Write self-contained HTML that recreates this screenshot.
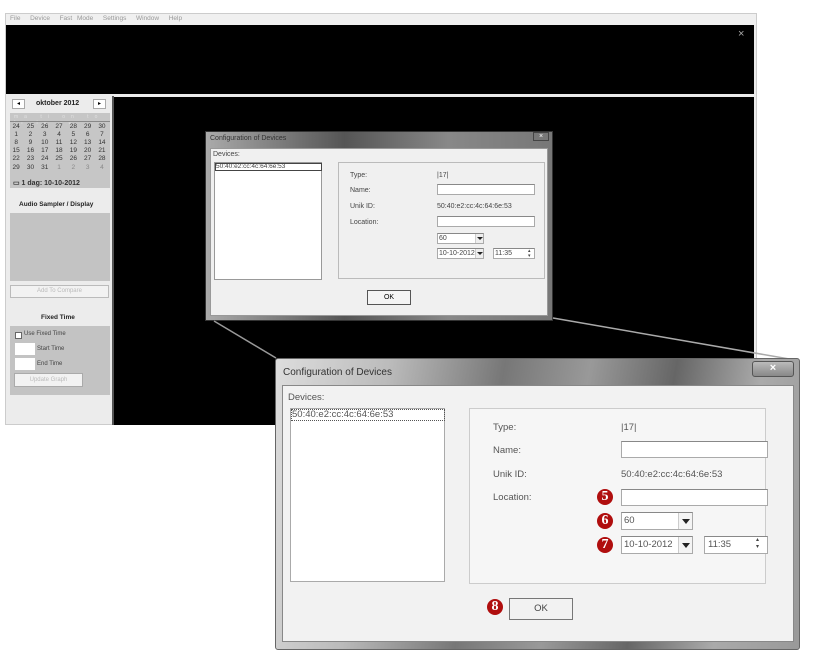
<!DOCTYPE html>
<html><head><meta charset="utf-8"><style>
*{box-sizing:border-box;margin:0;padding:0}
body{width:813px;height:654px;background:#fff;position:relative;overflow:hidden;font-family:"Liberation Sans",sans-serif}
.a{position:absolute}
.t{position:absolute;font-size:7px;color:#444;white-space:nowrap}
.t2{position:absolute;font-size:9.5px;color:#555;white-space:nowrap}
.inp{position:absolute;background:#fff;border:1px solid #aaa;border-top-color:#888}
.dd{position:absolute;right:0;top:0;bottom:0;width:14px;border-left:1px solid #ccc;background:#f4f4f4}
.dd:after{content:"";position:absolute;left:3px;top:6px;border-left:4px solid transparent;border-right:4px solid transparent;border-top:5px solid #222}
.sd{position:absolute;right:0;top:0;bottom:0;width:8px;background:#eee;border-left:1px solid #ccc}
.sd:after{content:"";position:absolute;left:1px;top:3px;border-left:3px solid transparent;border-right:3px solid transparent;border-top:3px solid #222}
.num{position:absolute;width:16px;height:16px;border-radius:50%;background:#b00e0e;color:#fff;font-family:"Liberation Serif",serif;font-weight:bold;font-size:14px;line-height:16px;text-align:center}
.cal{position:absolute;font-size:6.5px;color:#333;font-weight:bold}
.g td{width:14.3px;text-align:center;font-size:6.5px;color:#333;height:8.1px;padding:0;line-height:8px}
</style></head><body>
<div class="a" style="left:5px;top:13px;width:752px;height:412px;background:#ececec;border:1px solid #ccc"></div>
<div class="a" style="left:6px;top:14px;width:750px;height:11px;background:#f0f0f0"></div>
<div class="t" style="left:10px;top:15px;color:#999;font-size:6.5px;word-spacing:3px">File&nbsp; Device&nbsp; Fast Mode&nbsp; Settings&nbsp; Window&nbsp; Help</div>
<div class="a" style="left:6px;top:25px;width:748px;height:69px;background:#000"></div>
<div class="t" style="left:738px;top:28px;color:#aaa;font-size:11px">×</div>
<div class="a" style="left:114px;top:97px;width:640px;height:328px;background:#000"></div>
<div class="a" style="left:112px;top:96px;width:2px;height:329px;background:#555"></div>
<div class="a" style="left:12px;top:99px;width:13px;height:10px;background:#fff;border:1px solid #aaa;font-size:6px;text-align:center;line-height:8px">◂</div>
<div class="a" style="left:93px;top:99px;width:13px;height:10px;background:#fff;border:1px solid #aaa;font-size:6px;text-align:center;line-height:8px">▸</div>
<div class="cal" style="left:36px;top:100px;font-size:7px;color:#222">oktober 2012</div>
<div class="a" style="left:10px;top:113px;width:100px;height:75px;background:#c6c6c6"></div>
<div class="a" style="left:10px;top:114px;width:100px;height:6px;font-size:5px;color:#e0e0e0;letter-spacing:6px;padding-left:4px">ma ti on to fr lø sø</div>
<div class="a" style="left:10px;top:121px;width:100px;height:1px;background:#888"></div>
<table class="a g" style="left:9px;top:123px;border-collapse:collapse">
<tr><td>24</td><td>25</td><td>26</td><td>27</td><td>28</td><td>29</td><td>30</td></tr>
<tr><td>1</td><td>2</td><td>3</td><td>4</td><td>5</td><td>6</td><td>7</td></tr>
<tr><td>8</td><td>9</td><td>10</td><td>11</td><td>12</td><td>13</td><td>14</td></tr>
<tr><td>15</td><td>16</td><td>17</td><td>18</td><td>19</td><td>20</td><td>21</td></tr>
<tr><td>22</td><td>23</td><td>24</td><td>25</td><td>26</td><td>27</td><td>28</td></tr>
<tr><td>29</td><td>30</td><td>31</td><td style="color:#888">1</td><td style="color:#888">2</td><td style="color:#888">3</td><td style="color:#888">4</td></tr>
</table>
<div class="cal" style="left:13px;top:179px;font-size:7px">▭ 1 dag: 10-10-2012</div>
<div class="cal" style="left:19px;top:201px;font-size:6.5px;color:#222">Audio Sampler / Display</div>
<div class="a" style="left:10px;top:213px;width:100px;height:68px;background:#c3c3c3"></div>
<div class="a" style="left:10px;top:285px;width:99px;height:13px;background:#f2f2f2;border:1px solid #bbb;font-size:6px;color:#bbb;text-align:center;line-height:11px">Add To Compare</div>
<div class="cal" style="left:41px;top:314px;font-size:6.5px;color:#222">Fixed Time</div>
<div class="a" style="left:10px;top:326px;width:100px;height:69px;background:#c3c3c3"></div>
<div class="a" style="left:15px;top:332px;width:7px;height:7px;background:#fff;border:1px solid #666"></div>
<div class="t" style="left:24px;top:331px;font-size:6px">Use Fixed Time</div>
<div class="a" style="left:15px;top:343px;width:20px;height:12px;background:#fff"></div>
<div class="t" style="left:37px;top:346px;font-size:6px">Start Time</div>
<div class="a" style="left:15px;top:358px;width:20px;height:12px;background:#fff"></div>
<div class="t" style="left:37px;top:361px;font-size:6px">End Time</div>
<div class="a" style="left:14px;top:373px;width:69px;height:14px;background:#f2f2f2;border:1px solid #aaa;font-size:6px;color:#bbb;text-align:center;line-height:12px">Update Graph</div>
<div class="a" style="left:205px;top:131px;width:348px;height:190px;background:linear-gradient(90deg,#aaa,#555 40%,#888 70%,#777);border:1px solid #333"></div>
<div class="t" style="left:210px;top:135px;color:#333">Configuration of Devices</div>
<div class="a" style="left:533px;top:132px;width:16px;height:9px;background:#777;border:1px solid #444;color:#fff;font-size:7px;text-align:center;line-height:7px">×</div>
<div class="a" style="left:210px;top:148px;width:338px;height:168px;background:#f0f0f0;border:1px solid #999"></div>
<div class="t" style="left:213px;top:151px">Devices:</div>
<div class="a" style="left:214px;top:162px;width:108px;height:118px;background:#fff;border:1px solid #999"></div>
<div class="a" style="left:215px;top:163px;width:107px;height:8px;border:1px solid #444"></div>
<div class="t" style="left:216px;top:163px;font-size:6.5px">50:40:e2:cc:4c:64:6e:53</div>
<div class="a" style="left:338px;top:162px;width:207px;height:117px;border:1px solid #bbb;background:#f0f0f0"></div>
<div class="t" style="left:350px;top:172px">Type:</div><div class="t" style="left:437px;top:172px">|17|</div>
<div class="t" style="left:350px;top:187px">Name:</div><div class="inp" style="left:437px;top:184px;width:98px;height:11px"></div>
<div class="t" style="left:350px;top:203px">Unik ID:</div><div class="t" style="left:437px;top:203px">50:40:e2:cc:4c:64:6e:53</div>
<div class="t" style="left:350px;top:219px">Location:</div><div class="inp" style="left:437px;top:216px;width:98px;height:11px"></div>
<div class="inp" style="left:437px;top:233px;width:47px;height:11px"><span class="t" style="left:1px;top:1px">60</span><div class="sd"></div></div>
<div class="inp" style="left:437px;top:248px;width:47px;height:11px"><span class="t" style="left:1px;top:1px">10-10-2012</span><div class="sd"></div></div>
<div class="inp" style="left:493px;top:248px;width:42px;height:11px"><span class="t" style="left:1px;top:1px">11:35</span><span class="t" style="left:34px;top:0;font-size:5px;line-height:5px">▴<br>▾</span></div>
<div class="a" style="left:367px;top:290px;width:44px;height:15px;background:#f4f4f4;border:1px solid #555;font-size:7px;text-align:center;line-height:13px">OK</div>
<svg class="a" style="left:0;top:0" width="813" height="654"><line x1="214" y1="321" x2="276" y2="358" stroke="#999" stroke-width="1.5"/><line x1="553" y1="318" x2="795" y2="360" stroke="#aaa" stroke-width="1.5"/></svg>
<div class="a" style="left:275px;top:358px;width:525px;height:292px;background:linear-gradient(100deg,#ddd 0%,#bbb 20%,#777 40%,#999 55%,#666 70%,#aaa 85%,#999 100%);border:1px solid #666;border-radius:3px"></div>
<div class="t2" style="left:283px;top:367px;color:#333;font-size:10px">Configuration of Devices</div>
<div class="a" style="left:752px;top:361px;width:42px;height:16px;background:linear-gradient(#bbb,#888);border:1px solid #555;border-radius:3px;color:#fff;font-size:11px;text-align:center;line-height:13px;font-weight:bold">×</div>
<div class="a" style="left:282px;top:385px;width:512px;height:257px;background:#f2f2f2;border:1px solid #888"></div>
<div class="t2" style="left:288px;top:392px">Devices:</div>
<div class="a" style="left:290px;top:408px;width:155px;height:174px;background:#fff;border:1px solid #aaa"></div>
<div class="a" style="left:291px;top:409px;width:154px;height:12px;border:1px dotted #555"></div>
<div class="t2" style="left:292px;top:409px">50:40:e2:cc:4c:64:6e:53</div>
<div class="a" style="left:469px;top:408px;width:297px;height:176px;border:1px solid #ccc;background:#f6f6f6"></div>
<div class="t2" style="left:493px;top:422px">Type:</div><div class="t2" style="left:621px;top:422px">|17|</div>
<div class="t2" style="left:493px;top:445px">Name:</div><div class="inp" style="left:621px;top:441px;width:147px;height:17px"></div>
<div class="t2" style="left:493px;top:469px">Unik ID:</div><div class="t2" style="left:621px;top:469px">50:40:e2:cc:4c:64:6e:53</div>
<div class="t2" style="left:493px;top:492px">Location:</div><div class="inp" style="left:621px;top:489px;width:147px;height:17px"></div>
<div class="inp" style="left:621px;top:512px;width:72px;height:18px"><span class="t2" style="left:2px;top:2px">60</span><div class="dd"></div></div>
<div class="inp" style="left:621px;top:536px;width:72px;height:18px"><span class="t2" style="left:2px;top:2px">10-10-2012</span><div class="dd"></div></div>
<div class="inp" style="left:704px;top:536px;width:64px;height:18px"><span class="t2" style="left:3px;top:2px">11:35</span><span class="t" style="left:51px;top:0;font-size:6px;line-height:7px">▴<br>▾</span></div>
<div class="num" style="left:597px;top:489px">5</div>
<div class="num" style="left:597px;top:513px">6</div>
<div class="num" style="left:597px;top:537px">7</div>
<div class="num" style="left:487px;top:599px">8</div>
<div class="a" style="left:509px;top:598px;width:64px;height:22px;background:#f2f2f2;border:1px solid #777;font-size:9.5px;color:#444;text-align:center;line-height:20px">OK</div>
</body></html>
